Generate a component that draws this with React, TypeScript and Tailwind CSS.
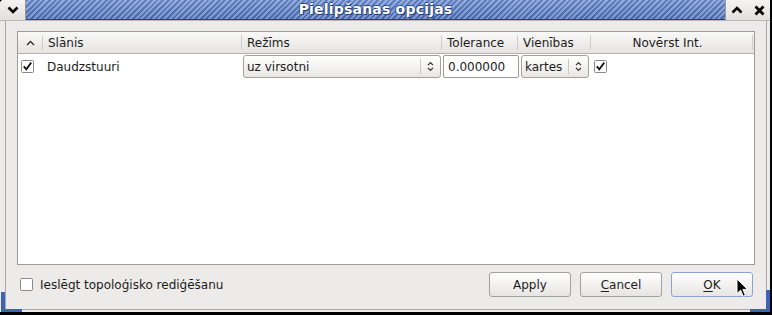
import React from 'react';

// Dialog "Pielipšanas opcijas" – GTK/Clearlooks look, fixed 772x315 window.

function Check({ checked }: { checked: boolean }) {
  return (
    <svg width="13" height="13" viewBox="0 0 13 13" className="shrink-0">
      <rect x="0.5" y="0.5" width="12" height="12" rx="1" fill="#fff" stroke="#8a8885" />
      {checked && <path d="M2.8 6.4 L5.3 9.3 L10.2 2.6" fill="none" stroke="#111" strokeWidth="1.8" />}
    </svg>
  );
}

function UpDown() {
  return (
    <svg width="7" height="11" viewBox="0 0 7 11" className="shrink-0">
      <path d="M1 4.2 L3.5 1.6 L6 4.2 M1 6.8 L3.5 9.4 L6 6.8" fill="none" stroke="#2e2e2e" strokeWidth="1.2" />
    </svg>
  );
}

function Combo({ label, width }: { label: string; width: string }) {
  return (
    <div
      className={`${width} h-[23px] flex items-center rounded-[3px] border border-[#a3a19e] bg-[linear-gradient(#ffffff,#e9e7e4)] shrink-0`}
    >
      <span className="flex-1 pl-[3px] truncate">{label}</span>
      <span className="w-px h-[15px] bg-[#c9c7c3]" />
      <span className="w-[19px] flex justify-center">
        <UpDown />
      </span>
    </div>
  );
}

function Btn({ children, focus }: { children: React.ReactNode; focus?: boolean }) {
  return (
    <div
      className={`w-[82px] h-[25px] flex items-center justify-center rounded-[3px] border bg-[linear-gradient(#ffffff,#e7e5e2)] ${
        focus ? 'border-[#8ba4cf]' : 'border-[#a3a19e]'
      }`}
    >
      {children}
    </div>
  );
}

function HeadCell({ w, children, center }: { w: string; children?: React.ReactNode; center?: boolean }) {
  return (
    <div className={`${w} h-full flex items-center shrink-0`}>
      <span className="w-px h-[15px] bg-[#cfcdc9] shrink-0" />
      <span className={center ? 'flex-1 text-center pr-[8px]' : 'pl-[5px]'}>{children}</span>
    </div>
  );
}

export default function App() {
  return (
    <div className="relative w-[772px] h-[315px] bg-black overflow-hidden font-['DejaVu_Sans',sans-serif] text-[12px] text-[#1c1c1c]">
      <div className="w-[770px] h-[312px] flex flex-col bg-[#edebe9] rounded-tl-[4px] overflow-hidden">
        {/* title bar */}
        <div className="h-[21px] flex shrink-0 border-b border-[#b9b7b4]">
          <div className="w-[26px] flex items-center justify-center bg-[linear-gradient(#f4f3f1,#e2e0dd)] border-r border-[#9a9895]">
            <svg width="12" height="8" viewBox="0 0 12 8">
              <path d="M1.5 1.5 L6 6 L10.5 1.5" fill="none" stroke="#000" strokeWidth="2.6" />
            </svg>
          </div>
          <div className="flex-1 flex items-center justify-center border-b border-[#22428a] bg-[linear-gradient(rgba(255,255,255,0.12),rgba(0,0,40,0.08)),repeating-linear-gradient(135deg,#4e70b6_0px,#4e70b6_2px,#87a3da_2px,#87a3da_4px)]">
            <span className="text-white font-bold text-[14px] tracking-[0.2px] [text-shadow:1px_1px_0_#1f3c78,-1px_0_0_#2a4a8a,0_-1px_0_#2a4a8a]">
              Pielipšanas opcijas
            </span>
          </div>
          <div className="w-[45px] flex bg-[linear-gradient(#f4f3f1,#e2e0dd)] border-l border-[#9a9895]">
            <div className="w-[23px] flex items-center justify-center">
              <svg width="12" height="8" viewBox="0 0 12 8">
                <path d="M1.5 6.5 L6 2 L10.5 6.5" fill="none" stroke="#000" strokeWidth="2.6" />
              </svg>
            </div>
            <div className="w-[22px] flex items-center justify-center">
              <svg width="11" height="11" viewBox="0 0 11 11">
                <path d="M1.5 1.5 L9.5 9.5 M9.5 1.5 L1.5 9.5" fill="none" stroke="#000" strokeWidth="2.8" />
              </svg>
            </div>
          </div>
        </div>

        {/* body */}
        <div className="flex-1 flex flex-col ml-[5px] mr-[3px] mb-[2px] border-l border-r border-b border-[#a9a7a4] pt-[10px] pl-[11px] pr-[11px] pb-[12px]">
          <div className="h-[234px] flex flex-col border border-[#9d9b98] bg-white shrink-0">
            <div className="h-[22px] flex items-center border-b border-[#b4b2ae] bg-[linear-gradient(#f8f8f7,#e6e4e1)] shrink-0">
              <div className="w-[24px] h-full flex items-center justify-center shrink-0">
                <svg width="9" height="6" viewBox="0 0 9 6">
                  <path d="M1 5 L4.5 1.5 L8 5" fill="none" stroke="#2a2a2a" strokeWidth="1.3" />
                </svg>
              </div>
              <HeadCell w="w-[199px]">Slānis</HeadCell>
              <HeadCell w="w-[200px]">Režīms</HeadCell>
              <HeadCell w="w-[76px]">Tolerance</HeadCell>
              <HeadCell w="w-[73px]">Vienības</HeadCell>
              <HeadCell w="w-[162px]" center>
                Novērst Int.
              </HeadCell>
              <span className="w-px h-[15px] bg-[#cfcdc9] shrink-0" />
            </div>
            <div className="h-[25px] flex items-center">
              <div className="w-[24px] pl-[3px] shrink-0">
                <Check checked />
              </div>
              <div className="w-[199px] pl-[5px] shrink-0">Daudzstuuri</div>
              <div className="ml-[2px]">
                <Combo label="uz virsotni" width="w-[198px]" />
              </div>
              <div className="ml-[2px] w-[76px] h-[23px] flex items-center rounded-[2px] border border-[#9d9b98] bg-white pl-[4px] shrink-0">
                0.000000
              </div>
              <div className="ml-[2px]">
                <Combo label="kartes" width="w-[68px]" />
              </div>
              <div className="ml-[5px]">
                <Check checked />
              </div>
            </div>
          </div>

          <div className="mt-[7px] h-[25px] flex items-center">
            <div className="pl-[3px]">
              <Check checked={false} />
            </div>
            <span className="ml-[7px]">Ieslēgt topoloģisko rediģēšanu</span>
            <div className="ml-auto mr-[2px] flex gap-[9px]">
              <Btn>Apply</Btn>
              <Btn>
                <span>
                  <span className="underline underline-offset-2">C</span>ancel
                </span>
              </Btn>
              <Btn focus>
                <span>
                  <span className="underline underline-offset-2">O</span>K
                </span>
              </Btn>
            </div>
          </div>
        </div>
      </div>

      {/* resize corners */}
      <div className="absolute left-[1px] top-[292px] w-[4px] h-[20px] bg-[#3f64b5]" />
      <div className="absolute left-[1px] top-[309px] w-[21px] h-[3px] bg-[#3f64b5]" />
      <div className="absolute left-[766px] top-[290px] w-[4px] h-[22px] bg-[#3f64b5]" />
      <div className="absolute left-[750px] top-[309px] w-[20px] h-[3px] bg-[#3f64b5]" />

      {/* mouse pointer */}
      <svg className="absolute left-[736px] top-[278px]" width="13" height="20" viewBox="0 0 13 20">
        <path d="M1 1 L1 15.5 L4.6 12.2 L7.2 18.2 L9.4 17.2 L6.9 11.4 L11.6 11.4 Z" fill="#000" stroke="#fff" strokeWidth="1" />
      </svg>
    </div>
  );
}
